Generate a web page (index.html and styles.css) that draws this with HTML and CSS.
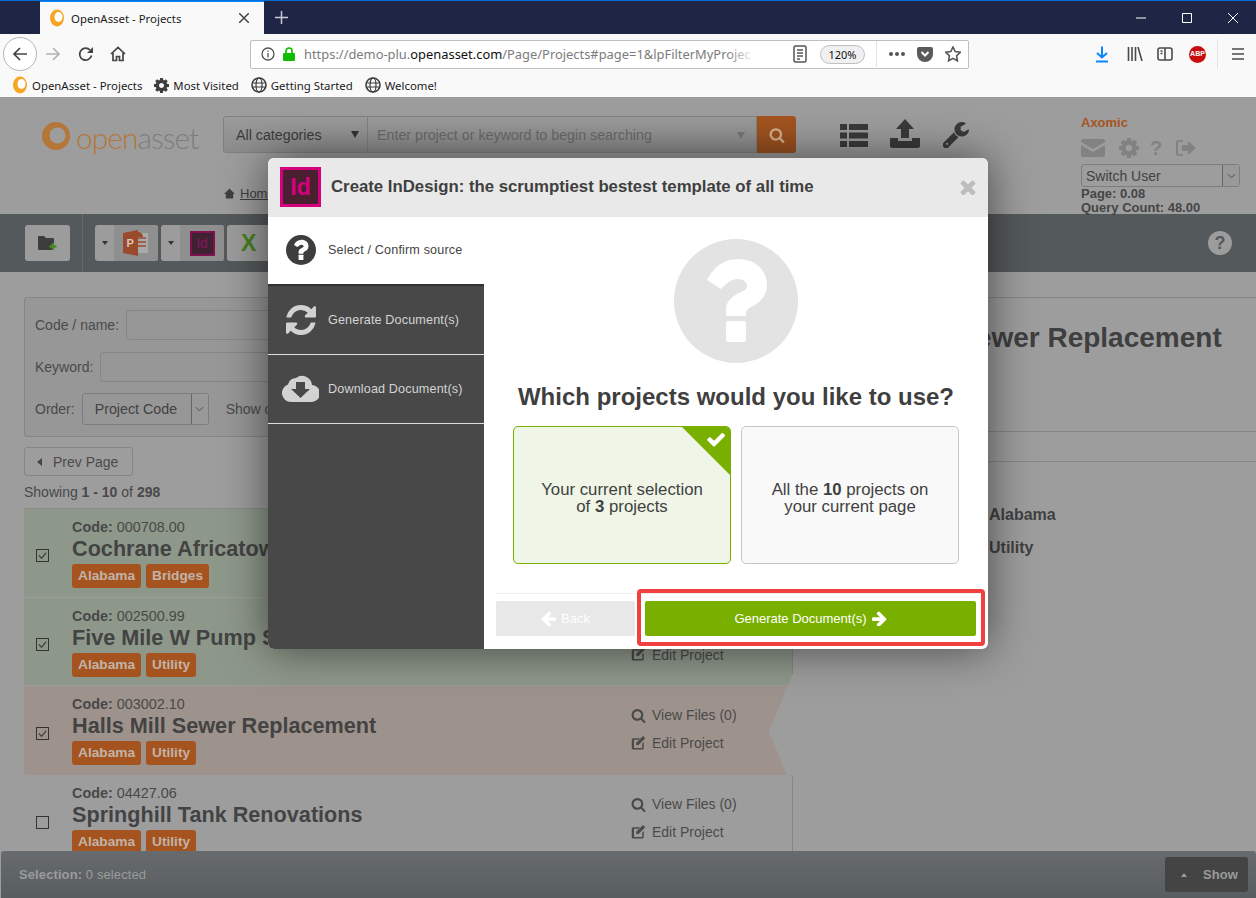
FILE: index.html
```html
<!DOCTYPE html>
<html lang="en">
<head>
    <meta charset="UTF-8">
    <meta name="viewport" content="width=device-width, initial-scale=1.0">
    <title>OpenAsset - Projects</title>
    <link rel="stylesheet" href="styles.css">
</head>
<body>
    <!-- shared icons -->
    <svg class="icon-defs" aria-hidden="true">
        <symbol id="i-search" viewBox="0 0 1792 1792"><path d="M1216 832q0-185-131.5-316.5t-316.5-131.5-316.5 131.5-131.5 316.5 131.5 316.5 316.5 131.5 316.5-131.5 131.5-316.5zm512 832q0 52-38 90t-90 38q-54 0-90-38l-343-342q-179 124-399 124-143 0-273.5-55.5t-225-150-150-225-55.5-273.5 55.5-273.5 150-225 225-150 273.5-55.5 273.5 55.5 225 150 150 225 55.5 273.5q0 220-124 399l343 343q37 37 37 90z"/></symbol>
        <symbol id="i-cog" viewBox="128 128 1536 1536"><path d="M1152 896q0-106-75-181t-181-75-181 75-75 181 75 181 181 75 181-75 75-181zm512-109v222q0 12-8 23t-20 13l-185 28q-19 54-39 91 35 50 107 138 10 12 10 25t-9 23q-27 37-99 108t-94 71q-12 0-26-9l-138-108q-44 23-91 38-16 136-29 186-7 28-36 28h-222q-14 0-24.5-8.5t-11.5-21.5l-28-184q-49-16-90-37l-141 107q-10 9-25 9-14 0-25-11-126-114-165-168-7-10-7-23 0-12 8-23 15-21 51-66.5t54-70.5q-27-50-41-99l-183-27q-13-2-21-12.5t-8-23.5v-222q0-12 8-23t19-13l186-28q14-46 39-92-40-57-107-138-10-12-10-24 0-10 9-23 26-36 98.5-107.5t94.5-71.5q13 0 26 10l138 107q44-23 91-38 16-136 29-186 7-28 36-28h222q14 0 24.5 8.5t11.5 21.5l28 184q49 16 90 37l142-107q9-9 24-9 13 0 25 10 129 119 165 170 7 8 7 22 0 12-8 23-15 21-51 66.5t-54 70.5q26 50 41 98l183 28q13 2 21 12.5t8 23.5z"/></symbol>
        <symbol id="i-wrench" viewBox="128 128 1600 1600"><path d="M448 1472q0-26-19-45t-45-19-45 19-19 45 19 45 45 19 45-19 19-45zm644-420l-682 682q-37 37-90 37-52 0-91-37l-106-108q-38-36-38-90 0-53 38-91l681-681q39 98 114.5 173.5t173.5 114.5zm634-435q0 39-23 106-47 134-164.5 217.5t-258.5 83.5q-185 0-316.5-131.5t-131.5-316.5 131.5-316.5 316.5-131.5q58 0 121.5 16.5t107.5 46.5q16 11 16 28t-16 28l-293 169v224l193 107q5-3 79-48.5t135.5-81 70.5-35.5q15 0 23.5 10t8.5 25z"/></symbol>
        <symbol id="i-refresh" viewBox="128 128 1536 1536"><path d="M1639 1056q0 5-1 7-64 268-268 434.5t-478 166.5q-146 0-282.5-55t-243.5-157l-129 129q-19 19-45 19t-45-19-19-45v-448q0-26 19-45t45-19h448q26 0 45 19t19 45-19 45l-137 137q71 66 161 102t187 36q134 0 250-65t186-179q11-17 53-117 8-23 30-23h192q13 0 22.5 9.5t9.5 22.5zm25-800v448q0 26-19 45t-45 19h-448q-26 0-45-19t-19-45 19-45l138-138q-148-137-349-137-134 0-250 65t-186 179q-11 17-53 117-8 23-30 23h-199q-13 0-22.5-9.5t-9.5-22.5v-7q65-268 270-434.5t480-166.5q146 0 284 55.5t245 156.5l130-129q19-19 45-19t45 19 19 45z"/></symbol>
        <symbol id="i-arrow" viewBox="128 128 1536 1536"><path d="M1600 960q0 54-37 91l-651 651q-39 37-91 37-51 0-90-37l-75-75q-38-38-38-91t38-91l293-293h-704q-52 0-84.5-37.5t-32.5-90.5v-128q0-53 32.5-90.5t84.5-37.5h704l-293-294q-38-36-38-90t38-90l75-75q38-38 90-38 53 0 91 38l651 651q37 35 37 90z"/></symbol>
        <symbol id="i-check" viewBox="128 256 1600 1300"><path d="M1671 566q0 40-28 68l-724 724-136 136q-28 28-68 28t-68-28l-136-136-362-362q-28-28-28-68t28-68l136-136q28-28 68-28t68 28l294 295 656-657q28-28 68-28t68 28l136 136q28 28 28 68z"/></symbol>
        <symbol id="i-times" viewBox="256 256 1280 1280"><path d="M1490 1322q0 40-28 68l-136 136q-28 28-68 28t-68-28l-294-294-294 294q-28 28-68 28t-68-28l-136-136q-28-28-28-68t28-68l294-294-294-294q-28-28-28-68t28-68l136-136q28-28 68-28t68 28l294 294 294-294q28-28 68-28t68 28l136 136q28 28 28 68t-28 68l-294 294 294 294q28 28 28 68z"/></symbol>
        <symbol id="i-edit" viewBox="0 0 20 20"><path d="M3 3h9l-2 2H4v11h11v-6l2-2v8a2 2 0 0 1-2 2H3a2 2 0 0 1-2-2V5a2 2 0 0 1 2-2z"/><path d="M16 0l3 3-9 9H7V9z"/></symbol>
        <symbol id="i-globe" viewBox="0 0 16 16"><circle cx="8" cy="8" r="7" fill="none" stroke="#3d3d3d" stroke-width="1.6"/><ellipse cx="8" cy="8" rx="3" ry="7" fill="none" stroke="#3d3d3d" stroke-width="1.2"/><path d="M1 6h14M1 10h14" stroke="#3d3d3d" stroke-width="1.2"/></symbol>
        <symbol id="i-asset" viewBox="0 0 28 28"><path fill-rule="evenodd" d="M14 0a14 14 0 1 1 0 28a14 14 0 1 1 0-28zM15.500 5.500a8 8 0 1 0 0 16a8 8 0 1 0 0-16z"/></symbol>
        <symbol id="i-ring" viewBox="0 0 16 18"><ellipse cx="8" cy="9" rx="7" ry="8.5" fill="#f5a623"/><ellipse cx="9.5" cy="8" rx="4" ry="5" fill="#fff"/></symbol>
    </svg>

    <div class="browser">
        <div class="tabbar">
            <div class="tab">
                <svg class="fav"><use href="#i-ring"/></svg>
                <span class="tab-title">OpenAsset - Projects</span>
                <svg class="tab-close" viewBox="0 0 10 10"><path d="M0 0l10 10M10 0L0 10"/></svg>
            </div>
            <svg class="tab-new" viewBox="0 0 14 14"><path d="M7 0v14M0 7h14"/></svg>
            <div class="win-btns">
                <svg viewBox="0 0 10 10"><path d="M0 5h10"/></svg>
                <svg viewBox="0 0 10 10"><path d="M.5.5h9v9h-9z"/></svg>
                <svg viewBox="0 0 10 10"><path d="M0 0l10 10M10 0L0 10"/></svg>
            </div>
        </div>
        <div class="navbar">
            <div class="nav-back">
                <svg viewBox="0 0 16 16"><path d="M15 8H2M8 2L2 8l6 6"/></svg>
            </div>
            <svg class="nav-icon nav-forward" viewBox="0 0 16 16"><path d="M1 8h13M8 2l6 6-6 6"/></svg>
            <svg class="nav-icon nav-reload" viewBox="0 0 16 16"><path d="M13.5 9.5A6 6 0 1 1 12 4"/><path class="solid" d="M15 1v6H9z"/></svg>
            <svg class="nav-icon nav-home" viewBox="0 0 16 16"><path d="M1 8l7-6.500L15 8M3 7v7.500h3.500v-4h3v4H13V7"/></svg>
            <div class="urlbar">
                <svg class="url-info" viewBox="0 0 14 14"><circle cx="7" cy="7" r="6"/><path d="M7 6v4.500M7 3.500v1.300"/></svg>
                <svg class="url-lock" viewBox="0 0 12 14"><path d="M1 6h10a1 1 0 0 1 1 1v6a1 1 0 0 1-1 1H1a1 1 0 0 1-1-1V7a1 1 0 0 1 1-1z"/><path class="shackle" d="M3 6.500V4a3 3 0 0 1 6 0v2.500"/></svg>
                <span class="url-text">https://demo-plu.<b>openasset.com</b>/Page/Projects#page=1&amp;lpFilterMyProjec</span>
                <svg class="url-reader" viewBox="0 0 14 18"><rect x="1" y="1" width="12" height="16" rx="1.500"/><path d="M4 5h6M4 8h6M4 11h6M4 14h3"/></svg>
                <span class="url-zoom">120%</span>
                <span class="url-sep"></span>
                <svg class="url-dots" viewBox="0 0 16 4"><circle cx="2" cy="2" r="2"/><circle cx="8" cy="2" r="2"/><circle cx="14" cy="2" r="2"/></svg>
                <svg class="url-pocket" viewBox="0 0 16 15"><path d="M2 0h12a2 2 0 0 1 2 2v5a8 8 0 0 1-16 0V2a2 2 0 0 1 2-2z"/><path class="chev" d="M4.500 5L8 8.500 11.500 5"/></svg>
                <svg class="url-star" viewBox="0 0 16 16"><path d="M8 1l2.200 4.600 5 .7-3.600 3.500.8 5L8 12.400 3.600 14.800l.8-5L.8 6.300l5-.7z"/></svg>
            </div>
            <div class="nav-tools">
                <svg class="tool-down" viewBox="0 0 14 16"><path d="M7 0v11M2 6.500L7 11l5-4.500M1 15h12"/></svg>
                <svg class="tool-lib" viewBox="0 0 16 14"><path d="M1.500 0v14M5 0v14M8.500 0v14M11 0l4 14"/></svg>
                <svg class="tool-side" viewBox="0 0 16 14"><rect x="1" y="1" width="14" height="12" rx="2"/><path d="M8 1v12M3.500 4h2M3.500 6.500h2"/></svg>
                <span class="tool-abp">ABP</span>
                <span class="tool-sep"></span>
                <svg class="tool-menu" viewBox="0 0 14 12"><path d="M1 1h12M1 6h12M1 11h12"/></svg>
            </div>
        </div>
        <div class="bookmarks">
            <span class="mark"><svg class="mark-ring"><use href="#i-ring"/></svg>OpenAsset - Projects</span>
            <span class="mark"><svg class="mark-icon mark-cog"><use href="#i-cog"/></svg>Most Visited</span>
            <span class="mark"><svg class="mark-icon"><use href="#i-globe"/></svg>Getting Started</span>
            <span class="mark"><svg class="mark-icon"><use href="#i-globe"/></svg>Welcome!</span>
        </div>
    </div>

    <div class="page">
        <header class="top">
            <div class="logo">
                <svg class="logo-ring"><use href="#i-asset"/></svg>
                <span class="logo-text"><span class="logo-open">open</span>asset</span>
            </div>
            <div class="search-col">
                <div class="search">
                    <div class="search-cat">All categories<span class="caret-down"></span></div>
                    <div class="search-input">Enter project or keyword to begin searching<span class="caret-down caret-light"></span></div>
                    <div class="search-btn"><svg><use href="#i-search"/></svg></div>
                </div>
                <div class="crumbs">
                    <svg viewBox="0 0 12 11"><path d="M6 0l6 6h-2v5H2V6H0z"/></svg>
                    <a>Home</a>
                </div>
            </div>
            <div class="top-icons">
                <svg class="top-list" viewBox="0 0 28 23"><path d="M0 0h7v6H0zM9 0h19v6H9zM0 8.500h7v6H0zM9 8.500h19v6H9zM0 17h7v6H0zM9 17h19v6H9z"/></svg>
                <svg class="top-upload" viewBox="0 0 30 29"><path d="M15 0l9 10h-5v9h-8v-9H6z"/><path d="M0 19h8v3h14v-3h8v8a2 2 0 0 1-2 2H2a2 2 0 0 1-2-2z"/></svg>
                <svg class="top-wrench"><use href="#i-wrench"/></svg>
            </div>
            <div class="user">
                <div class="user-name">Axomic</div>
                <div class="user-icons">
                    <svg class="u-mail" viewBox="0 0 24 18"><path d="M2 0h20a2 2 0 0 1 2 2v1L12 10 0 3V2a2 2 0 0 1 2-2z"/><path d="M0 6l12 7 12-7v10a2 2 0 0 1-2 2H2a2 2 0 0 1-2-2z"/></svg>
                    <svg class="u-cog"><use href="#i-cog"/></svg>
                    <span class="u-help">?</span>
                    <svg class="u-out" viewBox="0 0 20 16"><path fill="none" stroke="#828282" stroke-width="2" d="M7 1H3a2 2 0 0 0-2 2v10a2 2 0 0 0 2 2h4"/><path d="M12 1l8 7-8 7v-4H6V5h6z"/></svg>
                </div>
                <div class="select-box user-switch">Switch User<span class="select-arrow"><svg viewBox="0 0 10 6"><path d="M1 1l4 4 4-4"/></svg></span></div>
                <div class="user-stats">Page: 0.08<br>Query Count: 48.00</div>
            </div>
        </header>

        <div class="toolbar">
            <div class="tool-btn tool-folder">
                <svg viewBox="0 0 20 16"><path d="M0 2a1 1 0 0 1 1-1h5l2 2h7a1 1 0 0 1 1 1v10a1 1 0 0 1-1 1H1a1 1 0 0 1-1-1z" fill="#3d3d3d"/><path d="M15 8v7M11.500 11.500h7" stroke="#4a8a24" stroke-width="2.400"/></svg>
            </div>
            <span class="toolbar-sep"></span>
            <div class="tool-group">
                <span class="tool-drop"></span>
                <span class="tool-face">
                    <svg class="ppt" viewBox="0 0 26 26"><path d="M12 3h13v20H12z" fill="#a9a9a9"/><path d="M15 8h8M15 12h8M15 16h8" stroke="#9a4a2c" stroke-width="1.300"/><path d="M15 2a5 5 0 0 1 5 5h-5z" fill="#9a4a2c"/><path d="M0 3l15-3v26L0 23z" fill="#9a4a2c"/><text x="3.500" y="17" class="ppt-letter">P</text></svg>
                </span>
            </div>
            <div class="tool-group">
                <span class="tool-drop"></span>
                <span class="tool-face"><span class="id-small">Id</span></span>
            </div>
            <div class="tool-group tool-excel"><span class="excel-x">X</span></div>
            <span class="toolbar-help">?</span>
        </div>

        <div class="content">
            <div class="list-col">
                <form class="filters">
                    <div class="filter-line">
                        <label>Code / name:</label>
                        <span class="fake-input"></span>
                    </div>
                    <div class="filter-line">
                        <label>Keyword:</label>
                        <span class="fake-input"></span>
                    </div>
                    <div class="filter-line">
                        <label>Order:</label>
                        <div class="select-box order-select">Project Code<span class="select-arrow"><svg viewBox="0 0 10 6"><path d="M1 1l4 4 4-4"/></svg></span></div>
                        <span class="show-label">Show only my projects</span>
                    </div>
                </form>
                <div class="prev-btn"><span class="caret-left"></span>Prev Page</div>
                <div class="showing">Showing <b>1 - 10</b> of <b>298</b></div>

                <div class="rows">
                    <div class="row row-green">
                        <div class="row-check"><span class="checkbox"><svg viewBox="0 0 12 12"><path d="M2 6l3 3 5-6"/></svg></span></div>
                        <div class="row-main">
                            <div class="row-code"><b>Code:</b> 000708.00</div>
                            <div class="row-title">Cochrane Africatown Bridge</div>
                            <div class="row-tags"><span class="tag">Alabama</span><span class="tag">Bridges</span></div>
                        </div>
                        <div class="row-actions">
                            <a><svg><use href="#i-search"/></svg>View Files (0)</a>
                            <a><svg><use href="#i-edit"/></svg>Edit Project</a>
                        </div>
                    </div>
                    <div class="row row-green">
                        <div class="row-check"><span class="checkbox"><svg viewBox="0 0 12 12"><path d="M2 6l3 3 5-6"/></svg></span></div>
                        <div class="row-main">
                            <div class="row-code"><b>Code:</b> 002500.99</div>
                            <div class="row-title">Five Mile W Pump Station</div>
                            <div class="row-tags"><span class="tag">Alabama</span><span class="tag">Utility</span></div>
                        </div>
                        <div class="row-actions">
                            <a><svg><use href="#i-search"/></svg>View Files (0)</a>
                            <a><svg><use href="#i-edit"/></svg>Edit Project</a>
                        </div>
                    </div>
                    <div class="row row-active">
                        <div class="row-check"><span class="checkbox"><svg viewBox="0 0 12 12"><path d="M2 6l3 3 5-6"/></svg></span></div>
                        <div class="row-main">
                            <div class="row-code"><b>Code:</b> 003002.10</div>
                            <div class="row-title">Halls Mill Sewer Replacement</div>
                            <div class="row-tags"><span class="tag">Alabama</span><span class="tag">Utility</span></div>
                        </div>
                        <div class="row-actions">
                            <a><svg><use href="#i-search"/></svg>View Files (0)</a>
                            <a><svg><use href="#i-edit"/></svg>Edit Project</a>
                        </div>
                        <span class="row-notch"></span>
                    </div>
                    <div class="row">
                        <div class="row-check"><span class="checkbox"></span></div>
                        <div class="row-main">
                            <div class="row-code"><b>Code:</b> 04427.06</div>
                            <div class="row-title">Springhill Tank Renovations</div>
                            <div class="row-tags"><span class="tag">Alabama</span><span class="tag">Utility</span></div>
                        </div>
                        <div class="row-actions">
                            <a><svg><use href="#i-search"/></svg>View Files (0)</a>
                            <a><svg><use href="#i-edit"/></svg>Edit Project</a>
                        </div>
                    </div>
                </div>
            </div>

            <div class="detail">
                <h1>Halls Mill Sewer Replacement</h1>
                <div class="detail-band"></div>
                <div class="detail-value">Alabama</div>
                <div class="detail-value">Utility</div>
            </div>
        </div>

        <div class="selection-bar">
            <span><b>Selection:</b> 0 selected</span>
            <div class="show-btn"><span class="caret-up"></span>Show</div>
        </div>

        <!-- modal -->
        <div class="modal">
            <div class="modal-head">
                <span class="id-logo">Id</span>
                <h3>Create InDesign: the scrumptiest bestest template of all time</h3>
                <svg class="modal-close"><use href="#i-times"/></svg>
            </div>
            <div class="modal-body">
                <div class="steps">
                    <div class="step step-on">
                        <svg class="step-icon" viewBox="0 0 124 124"><circle cx="62" cy="62" r="62" fill="#3d3d3d"/><path fill="#fff" d="M33 41C39 29 49 20 64 20C80 20 93 30 93 46C93 57 86 63 79 67C75 69 72 71 72 74V77H52V71C52 62 58 58 65 54C70 52 73 50 73 47C73 43 69 40 64 40C57 40 53 44 47 50Z"/><rect fill="#fff" x="52" y="82" width="20" height="21" rx="2"/></svg>
                        Select / Confirm source
                    </div>
                    <div class="step">
                        <svg class="step-icon step-gray"><use href="#i-refresh"/></svg>
                        Generate Document(s)
                    </div>
                    <div class="step">
                        <svg class="step-icon step-cloud" viewBox="0 0 37 27"><path fill="#d2d2d2" d="M9 27a9 9 0 0 1-3-17.500A9 9 0 0 1 14 3a10 10 0 0 1 16 7 8.500 8.500 0 0 1-1 17z"/><path fill="#484848" d="M14 7h9v7h5l-9.500 9L9 14h5z"/></svg>
                        Download Document(s)
                    </div>
                </div>
                <div class="modal-main">
                    <svg class="big-question" viewBox="0 0 124 124"><circle cx="62" cy="62" r="62" fill="#e3e3e3"/><path fill="#fff" d="M33 41C39 29 49 20 64 20C80 20 93 30 93 46C93 57 86 63 79 67C75 69 72 71 72 74V77H52V71C52 62 58 58 65 54C70 52 73 50 73 47C73 43 69 40 64 40C57 40 53 44 47 50Z"/><rect fill="#fff" x="52" y="82" width="20" height="21" rx="2"/></svg>
                    <h2>Which projects would you like to use?</h2>
                    <div class="choices">
                        <div class="choice choice-on">
                            <span class="choice-corner"></span>
                            <svg class="choice-check"><use href="#i-check"/></svg>
                            <span>Your current selection<br>of <b>3</b> projects</span>
                        </div>
                        <div class="choice">
                            <span>All the <b>10</b> projects on<br>your current page</span>
                        </div>
                    </div>
                    <div class="modal-foot">
                        <div class="foot-btn foot-back"><svg class="flip"><use href="#i-arrow"/></svg>Back</div>
                        <div class="foot-btn foot-next">Generate Document(s)<svg><use href="#i-arrow"/></svg></div>
                    </div>
                </div>
            </div>
            <span class="callout"></span>
        </div>
    </div>
</body>
</html>
```

FILE: styles.css
```css
* {
    box-sizing: border-box;
}

html, body {
    margin: 0;
    padding: 0;
    height: 898px;
    overflow: hidden;
}

body {
    font-family: "Liberation Sans", Arial, sans-serif;
    font-size: 14px;
    color: #424242;
    background-color: #9d9d9d;
}

svg {
    display: block;
}

.icon-defs {
    position: absolute;
    width: 0;
    height: 0;
}

/* browser chrome */
.browser {
    height: 98px;
    font-family: "Noto Sans", "Open Sans", sans-serif;
    background-color: #f9f9fa;
    border-bottom: 1px solid #9a9a9a;
}

.tabbar {
    display: flex;
    align-items: center;
    height: 34px;
    padding-left: 40px;
    background-color: #1f2544;
    border-top: 1px solid #0a6fd8;
}

.tab {
    display: flex;
    align-items: center;
    width: 224px;
    height: 33px;
    padding: 0 15px 0 9px;
    background-color: #f9f9fa;
    border-top: 1px solid #0a84ff;
    font-size: 11.4px;
    color: #202020;
}

.fav {
    width: 16px;
    height: 18px;
    margin-right: 6px;
}

.tab-title {
    flex: 1;
}

.tab-close {
    width: 10px;
    height: 10px;
    fill: none;
    stroke: #444;
    stroke-width: 1.5;
}

.tab-new {
    width: 13px;
    height: 13px;
    margin-left: 11px;
    fill: none;
    stroke: #c9cbd6;
    stroke-width: 1.6;
}

.win-btns {
    display: flex;
    gap: 36px;
    margin-left: auto;
    padding-right: 18px;
}

.win-btns svg {
    width: 10px;
    height: 10px;
    fill: none;
    stroke: #fff;
}

.navbar {
    display: flex;
    align-items: center;
    height: 39px;
    padding: 1px 0 0 3px;
}

.nav-back {
    display: flex;
    align-items: center;
    justify-content: center;
    width: 34px;
    height: 34px;
    background-color: #fff;
    border: 1px solid #b5b5b5;
    border-radius: 50%;
}

.nav-back svg, .nav-icon {
    width: 16px;
    height: 16px;
    fill: none;
    stroke: #444;
    stroke-width: 1.7;
}

.nav-forward {
    margin-left: 8px;
    stroke: #b1b1b3;
}

.nav-reload {
    margin-left: 17px;
}

.nav-reload .solid {
    fill: #444;
    stroke: none;
}

.nav-home {
    margin-left: 16px;
}

.urlbar {
    display: flex;
    align-items: center;
    width: 719px;
    height: 29px;
    margin-left: 124px;
    padding: 0 7px 0 10px;
    background-color: #fff;
    border: 1px solid #bebebe;
    border-radius: 2px;
}

.url-info {
    flex: none;
    width: 14px;
    height: 14px;
    fill: none;
    stroke: #555;
    stroke-width: 1.3;
}

.url-lock {
    flex: none;
    width: 12px;
    height: 14px;
    margin-left: 8px;
    fill: #12bc00;
}

.url-lock .shackle {
    fill: none;
    stroke: #12bc00;
    stroke-width: 1.7;
}

.url-text {
    position: relative;
    flex: none;
    width: 452px;
    margin-left: 9px;
    overflow: hidden;
    white-space: nowrap;
    font-size: 12.9px;
    color: #7c7c7c;
}

.url-text::after {
    content: "";
    position: absolute;
    top: 0;
    right: 0;
    bottom: 0;
    width: 30px;
    background: linear-gradient(to right, rgba(255, 255, 255, 0), #fff);
}

.url-text b {
    font-weight: 400;
    color: #111;
}

.url-reader {
    flex: none;
    width: 14px;
    height: 18px;
    margin-left: 37px;
    fill: none;
    stroke: #555;
    stroke-width: 1.5;
}

.url-zoom {
    flex: none;
    width: 45px;
    height: 19px;
    margin-left: 13px;
    background-color: #f0f0f0;
    border: 1px solid #c0c0c0;
    border-radius: 10px;
    font-size: 11px;
    line-height: 17px;
    text-align: center;
    color: #111;
}

.url-sep {
    flex: none;
    width: 1px;
    height: 26px;
    margin-left: 11px;
    background-color: #e2e2e2;
}

.url-dots {
    flex: none;
    width: 16px;
    height: 4px;
    margin-left: 12px;
    fill: #555;
}

.url-pocket {
    flex: none;
    width: 16px;
    height: 15px;
    margin-left: 12px;
    fill: #5a5a5a;
}

.url-pocket .chev {
    fill: none;
    stroke: #fff;
    stroke-width: 2;
}

.url-star {
    flex: none;
    width: 16px;
    height: 16px;
    margin-left: 12px;
    fill: none;
    stroke: #555;
    stroke-width: 1.6;
}

.nav-tools {
    display: flex;
    align-items: center;
    height: 100%;
    margin-left: 126px;
}

.nav-tools svg {
    flex: none;
    fill: none;
    stroke: #4a4a4a;
    stroke-width: 1.6;
}

.tool-down {
    width: 14px;
    height: 17px;
    stroke: #0a84ff !important;
    stroke-width: 2 !important;
}

.tool-lib {
    width: 16px;
    height: 14px;
    margin-left: 18px;
}

.tool-side {
    width: 16px;
    height: 14px;
    margin-left: 14px;
}

.tool-abp {
    flex: none;
    width: 17px;
    height: 17px;
    margin-left: 16px;
    padding-top: 4px;
    background-color: #c70d0d;
    border-radius: 50%;
    font-family: "Liberation Sans", sans-serif;
    font-size: 7px;
    font-weight: 700;
    text-align: center;
    color: #fff;
}

.tool-sep {
    flex: none;
    width: 1px;
    height: 30px;
    margin-left: 11px;
    background-color: #e2e2e2;
}

.tool-menu {
    width: 14px;
    height: 12px;
    margin-left: 13px;
    stroke-width: 1.7 !important;
}

.bookmarks {
    display: flex;
    align-items: center;
    height: 24px;
    padding-left: 12px;
    font-size: 11.4px;
    color: #1a1a1a;
}

.mark {
    display: flex;
    align-items: center;
    gap: 4px;
    margin-right: 12px;
}

.mark-ring {
    width: 16px;
    height: 18px;
}

.mark-icon {
    width: 16px;
    height: 16px;
}

.mark-cog {
    width: 15px;
    height: 15px;
    fill: #3d3d3d;
}

/* page behind the dialog */
.page {
    position: relative;
    height: 800px;
    overflow: hidden;
    background-color: #9d9d9d;
}

.top {
    display: flex;
    height: 116px;
}

.logo {
    display: flex;
    align-items: flex-start;
    flex: none;
    width: 223px;
    padding: 24px 0 0 42px;
}

.logo-ring {
    flex: none;
    width: 28px;
    height: 28px;
    fill: #b5763a;
}

.logo-text {
    margin: -4px 0 0 6px;
    font-family: Lato, sans-serif;
    font-size: 30px;
    font-weight: 300;
    line-height: 38px;
    letter-spacing: -1px;
    color: #7e7e7e;
}

.logo-open {
    color: #b5763a;
}

.search-col {
    flex: none;
    width: 573px;
    padding-top: 18px;
}

.search {
    display: flex;
    height: 37px;
    border-radius: 3px;
}

.search-cat, .search-input {
    position: relative;
    display: flex;
    align-items: center;
    background: linear-gradient(#9b9b9b, #8c8c8c);
    border: 1px solid #808080;
    font-size: 14.25px;
}

.search-cat {
    flex: none;
    width: 145px;
    padding-left: 12px;
    border-radius: 3px 0 0 3px;
    color: #3c3c3c;
}

.search-input {
    flex: 1;
    padding-left: 9px;
    border-left: 0;
    color: #6a6a6a;
}

.search-btn {
    display: flex;
    align-items: center;
    justify-content: center;
    flex: none;
    width: 39px;
    background: linear-gradient(#a5541f, #99501f);
    border-radius: 0 3px 3px 0;
    fill: #d5b28f;
}

.search-btn svg {
    width: 16px;
    height: 16px;
}

.caret-down {
    position: absolute;
    top: 14px;
    right: 8px;
    border-top: 7px solid #333;
    border-left: 4px solid transparent;
    border-right: 4px solid transparent;
}

.caret-light {
    right: 11px;
    top: 15px;
    border-top-color: #777;
}

.crumbs {
    display: flex;
    align-items: center;
    gap: 5px;
    margin-top: 33px;
    padding-left: 1px;
    font-size: 13px;
    color: #3f3f3f;
}

.crumbs svg {
    width: 11px;
    height: 11px;
    fill: #3f3f3f;
}

.crumbs a {
    text-decoration: underline;
}

.top-icons {
    display: flex;
    align-items: flex-start;
    flex: none;
    width: 285px;
    padding: 21px 0 0 44px;
    fill: #3a3a3a;
}

.top-list {
    width: 28px;
    height: 23px;
    margin-top: 5px;
}

.top-upload {
    width: 30px;
    height: 29px;
    margin-left: 22px;
}

.top-wrench {
    width: 26px;
    height: 26px;
    margin: 3px 0 0 23px;
}

.user {
    flex: none;
    width: 175px;
    padding-top: 17px;
}

.user-name {
    font-size: 13px;
    font-weight: 700;
    line-height: 15px;
    color: #a5551f;
}

.user-icons {
    display: flex;
    align-items: center;
    height: 22px;
    margin-top: 7px;
    fill: #828282;
}

.u-mail {
    width: 24px;
    height: 18px;
}

.u-cog {
    width: 20px;
    height: 20px;
    margin-left: 14px;
}

.u-help {
    width: 14px;
    margin-left: 11px;
    font-size: 20px;
    font-weight: 700;
    color: #828282;
}

.u-out {
    width: 20px;
    height: 16px;
    margin-left: 12px;
}

.select-box {
    position: relative;
    display: flex;
    align-items: center;
    border: 1px solid #7d7d7d;
    border-radius: 3px;
    color: #424242;
}

.select-arrow {
    position: absolute;
    top: 0;
    right: 0;
    bottom: 0;
    display: flex;
    align-items: center;
    justify-content: center;
    width: 17px;
    background-color: #999;
    border-left: 1px solid #666;
}

.select-arrow svg {
    width: 9px;
    height: 6px;
    fill: none;
    stroke: #444;
}

.user-switch {
    width: 159px;
    height: 23px;
    margin-top: 5px;
    padding-left: 4px;
    font-size: 14px;
}

.user-stats {
    font-size: 13px;
    font-weight: 700;
    line-height: 14px;
    color: #454545;
    white-space: nowrap;
}

.toolbar {
    display: flex;
    align-items: center;
    height: 58px;
    padding-left: 25px;
    background-color: #54595b;
}

.tool-btn, .tool-group {
    display: flex;
    height: 36px;
    background-color: #9c9c9c;
    border-radius: 3px;
    overflow: hidden;
}

.tool-folder {
    align-items: center;
    justify-content: center;
    width: 45px;
}

.tool-folder svg {
    width: 20px;
    height: 16px;
}

.toolbar-sep {
    align-self: stretch;
    width: 1px;
    margin: 0 12px;
    background-color: #666a6c;
}

.tool-group {
    width: 63px;
    margin-right: 3px;
}

.tool-drop {
    position: relative;
    flex: none;
    width: 19px;
}

.tool-drop::after {
    content: "";
    position: absolute;
    top: 16px;
    left: 7px;
    border-top: 4px solid #333;
    border-left: 3px solid transparent;
    border-right: 3px solid transparent;
}

.tool-face {
    display: flex;
    align-items: center;
    justify-content: center;
    flex: 1;
    background-color: #8f8f8f;
}

.ppt {
    width: 26px;
    height: 26px;
}

.ppt-letter {
    font-size: 11px;
    font-weight: 700;
    fill: #d9c4ba;
}

.id-small {
    width: 25px;
    height: 25px;
    background-color: #3f2232;
    border: 2px solid #80104f;
    font-size: 14px;
    line-height: 21px;
    text-align: center;
    color: #86145a;
}

.tool-excel {
    width: 60px;
    padding: 5px 0 0 14px;
}

.excel-x {
    font-size: 23px;
    font-weight: 700;
    color: #46801f;
}

.toolbar-help {
    width: 24px;
    height: 24px;
    margin-left: auto;
    margin-right: 24px;
    background-color: #9c9c9c;
    border-radius: 50%;
    font-size: 18px;
    font-weight: 700;
    line-height: 24px;
    text-align: center;
    color: #54595b;
}

.content {
    display: flex;
    margin-top: 25px;
}

.list-col {
    flex: none;
    width: 793px;
    padding-left: 24px;
}

.filters {
    height: 140px;
    padding: 12px 10px 0;
    background-color: #979797;
    border: 1px solid #858585;
    border-radius: 3px;
}

.filter-line {
    display: flex;
    align-items: center;
    gap: 7px;
    height: 30px;
    margin-bottom: 12px;
    color: #4a4a4a;
}

.fake-input {
    flex: 1;
    height: 100%;
    border: 1px solid #858585;
    border-radius: 3px;
}

.order-select {
    flex: none;
    width: 127px;
    height: 32px;
    padding-left: 12px;
    font-size: 14.25px;
}

.show-label {
    margin-left: 10px;
}

.prev-btn {
    display: flex;
    align-items: center;
    width: 109px;
    height: 29px;
    margin-top: 10px;
    padding-left: 12px;
    border: 1px solid #858585;
    border-radius: 3px;
    color: #4a4a4a;
}

.caret-left {
    margin-right: 11px;
    border-right: 5px solid #444;
    border-top: 4px solid transparent;
    border-bottom: 4px solid transparent;
}

.showing {
    margin-top: 8px;
    height: 24px;
    line-height: 16px;
    color: #484848;
}

.rows {
    border-top: 1px solid #8a8a8a;
}

.row {
    position: relative;
    display: flex;
    height: 88.7px;
    border-radius: 3px;
    border-right: 1px solid #858585;
}

.row-green {
    background-color: #8e988a;
    border-bottom: 1px solid #9d9d9d;
}

.row-active {
    background-color: #9e938c;
    border-right-color: transparent;
}

.row-check {
    flex: none;
    display: flex;
    align-items: center;
    width: 48px;
    padding: 6px 0 0 12px;
}

.checkbox {
    display: block;
    width: 13px;
    height: 13px;
    border: 1px solid #333;
}

.checkbox svg {
    width: 11px;
    height: 11px;
    fill: none;
    stroke: #444;
    stroke-width: 1.3;
}

.row-main {
    flex: 1;
    min-width: 0;
    padding-top: 11px;
    white-space: nowrap;
}

.row-code {
    font-size: 14.4px;
    line-height: 15px;
    color: #484848;
}

.row-title {
    margin-top: 1px;
    font-size: 21.65px;
    font-weight: 700;
    line-height: 25px;
    color: #434343;
}

.row-tags {
    display: flex;
    gap: 5px;
    margin-top: 3px;
}

.tag {
    padding: 0 6px;
    background-color: #a5531f;
    border-radius: 3px;
    font-size: 13.7px;
    font-weight: 700;
    line-height: 24px;
    color: #c2b3a8;
}

.row-actions {
    flex: none;
    width: 161px;
    padding-top: 20px;
    color: #4a4a4a;
}

.row-actions a {
    display: flex;
    align-items: center;
    gap: 6px;
    height: 18px;
    margin-bottom: 10px;
    fill: #4a4a4a;
}

.row-actions svg {
    width: 15px;
    height: 15px;
}

.row-notch {
    position: absolute;
    top: -14px;
    right: -1px;
    width: 24px;
    height: 118px;
    background-color: #9d9d9d;
    clip-path: polygon(100% 0, 0 50%, 100% 100%);
}

.detail {
    flex: 1;
    min-width: 0;
    border-top: 1px solid #858585;
    white-space: nowrap;
}

.detail h1 {
    margin: 24px 0 0 35px;
    font-size: 28px;
    line-height: 32px;
    color: #3f3f3f;
}

.detail-band {
    height: 31px;
    margin: 77px 0 44px;
    border-top: 1px solid #858585;
    border-bottom: 1px solid #858585;
}

.detail-value {
    height: 33px;
    padding-left: 196px;
    font-size: 16px;
    font-weight: 700;
    line-height: 18px;
    color: #414141;
}

.selection-bar {
    position: absolute;
    left: 1px;
    right: 0;
    bottom: 0;
    display: flex;
    align-items: center;
    justify-content: space-between;
    height: 47px;
    padding: 0 8px 0 18px;
    background: linear-gradient(#676b6d, #585d5f);
    border-radius: 3px 3px 0 0;
    font-size: 13px;
    letter-spacing: .1px;
    color: #999c9c;
}

.show-btn {
    display: flex;
    align-items: center;
    width: 83px;
    height: 35px;
    padding-left: 16px;
    background-color: #444;
    border-radius: 3px;
    font-weight: 700;
}

.caret-up {
    margin-right: 16px;
    border-bottom: 4px solid #999c9c;
    border-left: 3px solid transparent;
    border-right: 3px solid transparent;
}

/* dialog */
.modal {
    position: absolute;
    top: 60px;
    left: 268px;
    width: 720px;
    height: 491px;
    background-color: #fff;
    border-radius: 6px;
    box-shadow: 0 0 45px rgba(0, 0, 0, .55);
}

.modal-head {
    display: flex;
    align-items: center;
    height: 59px;
    padding: 0 12px 1px;
    background-color: #e9e9e9;
    border-radius: 6px 6px 0 0;
}

.id-logo {
    flex: none;
    width: 41px;
    height: 40px;
    background-color: #49202f;
    border: 3px solid #d6007f;
    font-size: 23px;
    font-weight: 700;
    line-height: 34px;
    text-align: center;
    color: #d6007f;
}

.modal-head h3 {
    flex: 1;
    margin: 0 0 0 10px;
    font-size: 16.78px;
    line-height: 20px;
    color: #3f3f3f;
}

.modal-close {
    width: 16px;
    height: 16px;
    fill: #bdbdbd;
}

.modal-body {
    display: flex;
    height: 432px;
}

.steps {
    flex: none;
    width: 216px;
    background-color: #484848;
    border-radius: 0 0 0 6px;
}

.step {
    display: flex;
    align-items: center;
    height: 69px;
    padding: 0 0 1px 18px;
    border-bottom: 1px solid #dcdcdc;
    font-size: 12.6px;
    letter-spacing: .15px;
    color: #d4d4d4;
}

.step-on {
    background-color: #fff;
    border-bottom: 2px solid #333;
    color: #444;
}

.step-icon {
    flex: none;
    width: 30px;
    height: 30px;
    margin-right: 12px;
}

.step-gray {
    fill: #d2d2d2;
}

.step-cloud {
    width: 37px;
    height: 27px;
    margin: 0 9px 0 -4px;
}

.modal-main {
    flex: 1;
    min-width: 0;
    padding: 22px 12px 0;
    text-align: center;
}

.big-question {
    width: 124px;
    height: 124px;
    margin: 0 auto;
}

.modal-main h2 {
    margin: 20px 0 0;
    font-size: 24px;
    line-height: 28px;
    color: #3f3f3f;
}

.choices {
    display: flex;
    gap: 10px;
    height: 138px;
    margin: 15px 17px 0;
}

.choice {
    position: relative;
    flex: 1;
    padding-top: 54px;
    overflow: hidden;
    background-color: #f9f9f9;
    border: 1px solid #c6c6c6;
    border-radius: 5px;
    font-size: 16.8px;
    line-height: 17px;
    color: #414141;
}

.choice-on {
    background-color: #eff5e7;
    border-color: #79b000;
}

.choice-corner {
    position: absolute;
    top: 0;
    right: 0;
    border-top: 48px solid #79b000;
    border-left: 48px solid transparent;
}

.choice-check {
    position: absolute;
    top: 5px;
    right: 4px;
    width: 19px;
    height: 15px;
    fill: #fff;
}

.modal-foot {
    display: flex;
    gap: 10px;
    margin-top: 29px;
    padding-top: 7px;
    border-top: 1px solid #eee;
}

.foot-btn {
    display: flex;
    align-items: center;
    justify-content: center;
    height: 35px;
    border-radius: 2px;
    font-size: 13px;
    color: #fff;
    fill: #fff;
}

.foot-btn svg {
    width: 15px;
    height: 15px;
    margin-left: 5px;
}

.foot-btn svg.flip {
    margin: 0 5px 0 0;
    transform: scaleX(-1);
}

.foot-back {
    flex: none;
    width: 139px;
    background-color: #e8e8e8;
}

.foot-next {
    flex: 1;
    background-color: #79b000;
}

/* red mark around the main button */
.callout {
    position: absolute;
    left: 369px;
    top: 431px;
    width: 348px;
    height: 57px;
    border: 4px solid #f0403f;
    border-radius: 4px;
}
```
